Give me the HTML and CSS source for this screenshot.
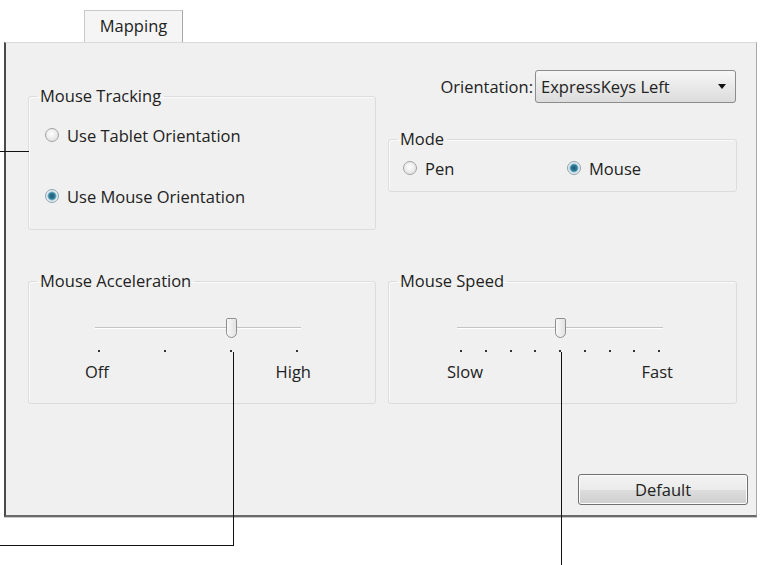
FILE: index.html
```html
<!DOCTYPE html>
<html lang="en">
<head>
    <meta charset="UTF-8">
    <meta name="viewport" content="width=device-width, initial-scale=1.0">
    <title>Tablet Properties - Mapping</title>
    <link rel="stylesheet" href="styles.css">
</head>
<body>
    <div class="screen">
        <!-- タブ -->
        <div class="tabs">
            <div class="tab">Mapping</div>
        </div>

        <div class="panel">
            <div class="groups">
                <fieldset class="group tracking">
                    <legend>Mouse Tracking</legend>
                    <div class="options stacked">
                        <label class="option"><span class="radio"></span>Use Tablet Orientation</label>
                        <label class="option"><span class="radio checked"></span>Use Mouse Orientation</label>
                    </div>
                </fieldset>

                <div class="right-col">
                    <div class="orientation">
                        <span>Orientation:</span>
                        <div class="select">
                            <span>ExpressKeys Left</span>
                            <span class="arrow"></span>
                        </div>
                    </div>
                    <fieldset class="group mode">
                        <legend>Mode</legend>
                        <div class="options inline">
                            <label class="option pen"><span class="radio"></span>Pen</label>
                            <label class="option"><span class="radio checked"></span>Mouse</label>
                        </div>
                    </fieldset>
                </div>

                <fieldset class="group">
                    <legend>Mouse Acceleration</legend>
                    <div class="slider accel">
                        <div class="track"><span class="thumb" style="left: 131px;"></span></div>
                        <div class="ticks">
                            <i></i><i></i><i></i><i></i>
                        </div>
                        <div class="ends"><span>Off</span><span>High</span></div>
                    </div>
                </fieldset>

                <fieldset class="group">
                    <legend>Mouse Speed</legend>
                    <div class="slider speed">
                        <div class="track"><span class="thumb" style="left: 98px;"></span></div>
                        <div class="ticks">
                            <i></i><i></i><i></i><i></i><i></i><i></i><i></i><i></i><i></i>
                        </div>
                        <div class="ends"><span>Slow</span><span>Fast</span></div>
                    </div>
                </fieldset>
            </div>

            <div class="footer">
                <button class="default-button">Default</button>
            </div>
        </div>

        <!-- 説明用の引き出し線 -->
        <div class="callout line-a"></div>
        <div class="callout line-b1"></div>
        <div class="callout line-b2"></div>
        <div class="callout line-c"></div>
    </div>
</body>
</html>
```

FILE: styles.css
```css
/* スタイル */
body {
    margin: 0;
    background-color: #ffffff;
    font-family: "Open Sans", "Noto Sans", sans-serif;
    font-size: 16.5px;
    color: #222222;
}
.screen {
    position: relative;
    width: 762px;
    height: 565px;
    overflow: hidden;
}
.tabs {
    height: 42px;
    display: flex;
    align-items: flex-end;
}
.tab {
    margin-left: 84px;
    width: 99px;
    height: 32px;
    box-sizing: border-box;
    border: 1px solid #c9c9c9;
    border-right-color: #a9a9a9;
    border-bottom: none;
    background-color: #f5f5f5;
    text-align: center;
    line-height: 30px;
}
.panel {
    margin-left: 4px;
    width: 753px;
    height: 475px;
    box-sizing: border-box;
    background-color: #f0f0f0;
    border-top: 1px solid #d9d9d9;
    border-left: 2px solid #4a4a4a;
    border-right: 1px solid #a8a8a8;
    border-bottom: 2px solid #6a6a6a;
    box-shadow: 0 1px 0 #c8c8c8;
    padding: 27px 8px 0 22px;
}
.groups {
    display: grid;
    grid-template-columns: 348px 349px;
    column-gap: 12px;
    row-gap: 41px;
    align-items: start;
    margin-right: 11px;
}
.group {
    margin: 0;
    padding: 0;
    border: 1px solid #dcdcdc;
    border-radius: 3px;
    box-shadow: inset 1px 1px 0 #fafafa;
    min-width: 0;
}
.group legend {
    margin-left: 8px;
    padding: 0 3px;
    line-height: 20px;
}
.tracking {
    margin-top: 16px;
}
.options {
    display: flex;
}
.options.stacked {
    flex-direction: column;
    gap: 39px;
    padding: 18px 0 22px 16px;
}
.options.inline {
    padding: 8px 0 12px 14px;
}
.option {
    display: flex;
    align-items: center;
    height: 22px;
    gap: 8px;
}
.option.pen {
    width: 164px;
}
.radio {
    width: 14px;
    height: 14px;
    box-sizing: border-box;
    border-radius: 50%;
    border: 1px solid #a3a3a3;
    background: radial-gradient(circle at 45% 40%, #ffffff 0, #e4e4e4 70%);
}
.radio.checked {
    border-color: #8ea3ad;
    background: radial-gradient(circle at 50% 50%, #1e5870 0, #2f7c99 3px, #7fb4c9 4px, #e6eef1 5px);
}
.right-col {
    display: flex;
    flex-direction: column;
}
.orientation {
    display: flex;
    justify-content: flex-end;
    align-items: center;
    gap: 2px;
    margin-right: 1px;
}
.select {
    width: 201px;
    height: 33px;
    box-sizing: border-box;
    border: 1px solid #8c8c8c;
    border-radius: 3px;
    background: linear-gradient(#f7f7f7, #e9e9e9 50%, #dcdcdc);
    display: flex;
    align-items: center;
    justify-content: space-between;
    padding: 0 9px 0 5px;
}
.arrow {
    width: 0;
    height: 0;
    border-left: 4px solid transparent;
    border-right: 4px solid transparent;
    border-top: 5px solid #111;
}
.mode {
    margin-top: 26px;
}
.slider {
    width: 206px;
    padding: 26px 0 21px;
}
.slider.accel {
    margin-left: 66px;
}
.slider.speed {
    margin-left: 68px;
}
.track {
    position: relative;
    height: 20px;
    margin-top: 1px;
    background: linear-gradient(transparent 9px, #c4c4c4 9px, #c4c4c4 10px, #ffffff 10px, #ffffff 11px, transparent 11px);
}
.thumb {
    position: absolute;
    top: 0;
    width: 11px;
    height: 20px;
    box-sizing: border-box;
    border: 1px solid #8f8f8f;
    border-radius: 2px 2px 6px 6px;
    background: linear-gradient(90deg, #f8f8f8, #e2e2e2);
}
.ticks {
    display: flex;
    justify-content: space-between;
    padding: 0 3px;
    margin-top: 12px;
    height: 3px;
}
.ticks i {
    width: 2px;
    height: 2px;
    background-color: #333;
}
.ends {
    display: flex;
    justify-content: space-between;
    margin: 9px -10px 0;
    line-height: 20px;
}
.footer {
    display: flex;
    justify-content: flex-end;
    margin-top: 70px;
}
.default-button {
    width: 170px;
    height: 31px;
    border: 1px solid #707070;
    border-radius: 3px;
    background: linear-gradient(#f3f3f3, #ebebeb 50%, #dddddd 51%, #cfcfcf);
    box-shadow: inset 0 0 0 1px #fcfcfc;
    font-family: inherit;
    font-size: 16.5px;
    color: #222222;
    padding: 0;
}
.callout {
    position: absolute;
    background-color: #111;
}
.line-a {
    left: 0;
    top: 151px;
    width: 29px;
    height: 1px;
}
.line-b1 {
    left: 233px;
    top: 352px;
    width: 1px;
    height: 194px;
}
.line-b2 {
    left: 0;
    top: 545px;
    width: 234px;
    height: 1px;
}
.line-c {
    left: 561px;
    top: 352px;
    width: 1px;
    height: 213px;
}
```
